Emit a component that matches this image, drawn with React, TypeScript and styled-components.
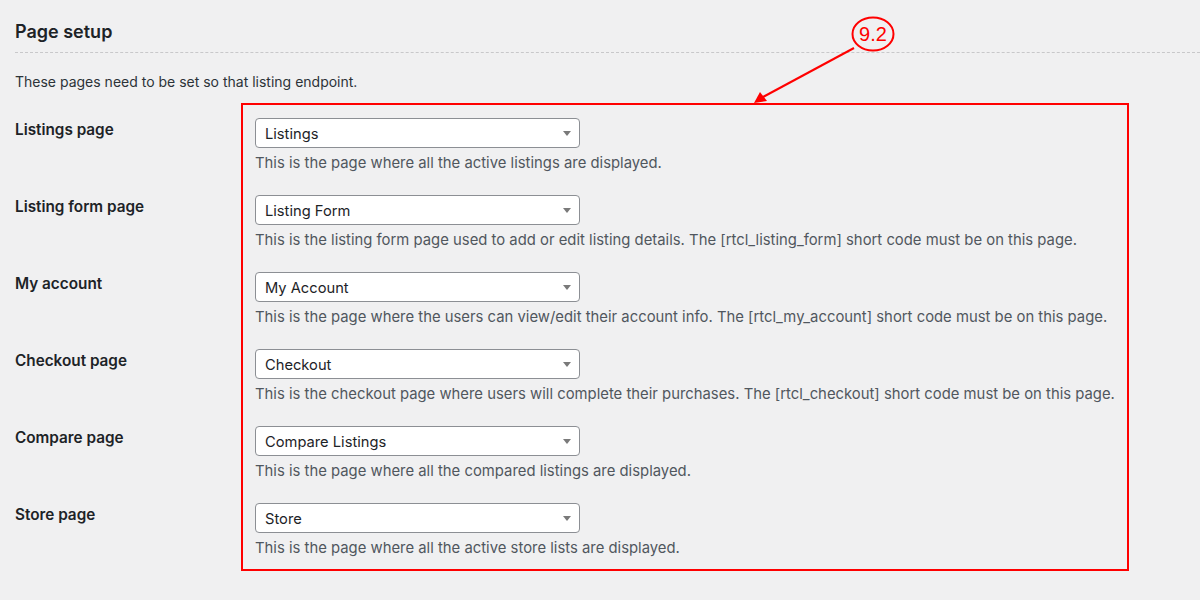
import React from 'react';
import styled, { createGlobalStyle } from 'styled-components';

const GlobalStyle = createGlobalStyle`
  html, body {
    margin: 0;
    padding: 0;
    background: #f0f0f1;
  }
  body {
    font-family: Inter, "Noto Sans", "DejaVu Sans", sans-serif;
    color: #1d2327;
  }
`;

/** ____________________________________________________    DATA
 * */
type Setting = {
    label: string
    value: string
    help: string
}

const settings: Setting[] = [
    {label: 'Listings page', value: 'Listings', help: 'This is the page where all the active listings are displayed.'},
    {
        label: 'Listing form page',
        value: 'Listing Form',
        help: 'This is the listing form page used to add or edit listing details. The [rtcl_listing_form] short code must be on this page.'
    },
    {
        label: 'My account',
        value: 'My Account',
        help: 'This is the page where the users can view/edit their account info. The [rtcl_my_account] short code must be on this page.'
    },
    {
        label: 'Checkout page',
        value: 'Checkout',
        help: 'This is the checkout page where users will complete their purchases. The [rtcl_checkout] short code must be on this page.'
    },
    {label: 'Compare page', value: 'Compare Listings', help: 'This is the page where all the compared listings are displayed.'},
    {label: 'Store page', value: 'Store', help: 'This is the page where all the active store lists are displayed.'},
];

/** ____________________________________________________    LAYOUT
 * */
const Page = styled.div`
    position: relative;
    width: 1200px;
    height: 600px;
    overflow: hidden;
`;

const Header = styled.div`
    padding: 20px 0 0 15px;
`;

const Title = styled.h2`
    margin: 0;
    font-size: 18px;
    line-height: 24px;
    font-weight: 600;
    color: #1d2327;
    padding-bottom: 8px;
    border-bottom: 1px dashed #c8c8ca;
`;

const Intro = styled.p`
    margin: 19px 0 0 15px;
    font-size: 14px;
    line-height: 20px;
    color: #2c3338;
`;

const Form = styled.div`
    margin: 26px 0 0 15px;
    display: flex;
    flex-direction: column;
    gap: 22px;
`;

const Row = styled.div`
    display: grid;
    grid-template-columns: 240px 1fr;
`;

const Label = styled.div`
    padding-top: 1px;
    font-size: 15.3px;
    line-height: 22px;
    font-weight: 600;
    color: #1d2327;
`;

const Field = styled.div`
    display: flex;
    flex-direction: column;
    gap: 5px;
`;

const Select = styled.div`
    width: 325px;
    height: 30px;
    box-sizing: border-box;
    display: flex;
    align-items: center;
    justify-content: space-between;
    padding: 1px 8px 0 9px;
    background: #fff;
    border: 1px solid #8c8f94;
    border-radius: 4px;
    font-size: 14.7px;
    color: #1d2327;
`;

const Caret = styled.span`
    width: 0;
    height: 0;
    border-left: 4.5px solid transparent;
    border-right: 4.5px solid transparent;
    border-top: 5px solid #7a7a7a;
`;

const Help = styled.p`
    margin: 0;
    font-size: 14.85px;
    line-height: 20px;
    color: #50575e;
`;

/** ____________________________________________________    ANNOTATION
 * */
const Highlight = styled.div`
    position: absolute;
    left: 241px;
    top: 103px;
    width: 888px;
    height: 468px;
    box-sizing: border-box;
    border: 2px solid #f00;
    pointer-events: none;
`;

const Marker = styled.svg`
    position: absolute;
    left: 0;
    top: 0;
    pointer-events: none;
`;

const MarkerText = styled.text`
    font-family: "Liberation Sans", Arial, sans-serif;
    font-size: 20px;
    fill: #f00;
`;

const Annotation = () => (
    <>
        <Highlight/>
        <Marker width={1200} height={600} viewBox="0 0 1200 600">
            <ellipse cx={873} cy={34} rx={20.5} ry={16.5} fill="none" stroke="#f00" strokeWidth={2}/>
            <MarkerText x={873} y={41} textAnchor="middle">9.2</MarkerText>
            <line x1={854} y1={48} x2={763} y2={97} stroke="#f00" strokeWidth={2}/>
            <polygon points="754,103 760,92 767,101" fill="#f00"/>
        </Marker>
    </>
);

export default function App() {
    return (
        <Page>
            <GlobalStyle/>
            <Header>
                <Title>Page setup</Title>
            </Header>
            <Intro>These pages need to be set so that listing endpoint.</Intro>
            <Form>
                {settings.map(s => (
                    <Row key={s.label}>
                        <Label>{s.label}</Label>
                        <Field>
                            <Select>
                                <span>{s.value}</span>
                                <Caret/>
                            </Select>
                            <Help>{s.help}</Help>
                        </Field>
                    </Row>
                ))}
            </Form>
            <Annotation/>
        </Page>
    );
}
